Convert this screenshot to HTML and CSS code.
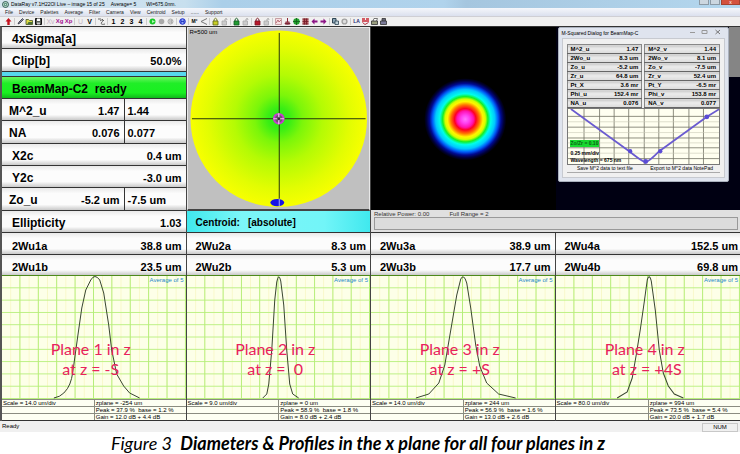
FILE: index.html
```html
<!DOCTYPE html>
<html lang="en">
<head>
<meta charset="utf-8">
<title>DataRay BeamMap</title>
<link rel="stylesheet" href="styles.css">
</head>
<body>
<figure class="figure">
<div class="app">
  <header class="titlebar">
    <svg class="logo" viewBox="0 0 8 8"><circle cx="4" cy="4" r="3.4" fill="#cfe4dc" stroke="#17483d"/><circle cx="4" cy="4" r="1.4" fill="none" stroke="#1c6b4a"/></svg>
    <span>DataRay v7.1H22Ol Live – image 15 of 25</span><span class="title-avg">Average= 5</span><span>Wl=675.0nm.</span>
    <span class="window-buttons"><button class="winbtn" aria-label="Minimize"></button><button class="winbtn" aria-label="Maximize"></button><button class="winbtn close" aria-label="Close">x</button></span>
  </header>
  <nav class="menubar"><a href="#">File</a><a href="#">Device</a><a href="#">Palettes</a><a href="#">Average</a><a href="#">Filter</a><a href="#">Camera</a><a href="#">View</a><a href="#">Centroid</a><a href="#">Setup</a><a href="#">......</a><a href="#">Support</a></nav>
  <div class="toolbar">
    <button aria-label="Up"><svg viewBox="0 0 9 9"><path d="M4.5 1 7.5 4.5H5.7V8H3.3V4.5H1.5z" fill="#c3101c"/></svg></button><i></i>
    <button aria-label="Edit"><svg viewBox="0 0 9 9"><path d="M2 7 3 5 6.5 1.5 7.5 2.500 4 6z" fill="#8a8ca4" stroke="#30313c" stroke-width=".8"/></svg></button>
    <button aria-label="Open"><svg viewBox="0 0 9 9"><path d="M1 7.500V2.500H3.500L4.500 3.500H7.500V7.500z" fill="#dadb45" stroke="#45502a" stroke-width=".8"/><path d="M2 7.500 3.500 5H8L7 7.500z" fill="#4e7037"/></svg></button>
    <button aria-label="Save"><svg viewBox="0 0 9 9"><path d="M1.500 1.500H7.500V7.500H1.500z" fill="#555b55" stroke="#111"/><path d="M3 1.500H6V4H3z" fill="#fff"/><path d="M3 5.500H6V7.500H3z" fill="#ccc"/></svg></button><i></i>
    <button class="faded">Xv</button><button class="violet">Xg</button><button class="violet">Xp</button><i></i>
    <button class="faded">U</button><button>V</button><i></i>
    <button aria-label="Cursor"><svg viewBox="0 0 9 9"><path d="M1 2H4M3 4C5 2 7 3 5 5S5 8 8 7M5 2 7 4" fill="none" stroke="#555" stroke-width=".9"/></svg></button><i></i>
    <button>1</button><button>2</button><button>3</button><button>4</button><i></i>
    <button aria-label="Go"><svg viewBox="0 0 9 9"><circle cx="4.500" cy="4.500" r="3" fill="#18c928"/><path d="M4 3V6L7 4.500z" fill="#b1f5b5"/></svg></button>
    <button aria-label="Stop"><svg viewBox="0 0 9 9"><circle cx="4.500" cy="4.500" r="2.800" fill="#aaa"/></svg></button>
    <button aria-label="Pause"><svg viewBox="0 0 9 9"><circle cx="4.500" cy="4.500" r="2.500" fill="#ddd" stroke="#aaa"/><path d="M4 3V6M5.500 3V6" stroke="#999" stroke-width=".7"/></svg></button><i></i>
    <button aria-label="Target"><svg viewBox="0 0 9 9"><circle cx="4.500" cy="4.500" r="2.800" fill="#8ea8f6" stroke="#1b2bd1"/><path d="M3 2.500V6.500M6 2.500V6.500M3 4.500H6" stroke="#1726ba" stroke-width=".8"/></svg></button><i></i>
    <button class="small">M²</button>
    <button aria-label="Divergence"><svg viewBox="0 0 9 9"><path d="M8 1.500 2 4.500 8 7.500" fill="none" stroke="#777"/></svg></button><i></i>
    <button aria-label="Lock"><svg viewBox="0 0 9 9"><path d="M3 4V2.500Q4.500 0 6 2.500V4" fill="none" stroke="#77801a"/><path d="M2 4H7V8H2z" fill="#c8cf26" stroke="#5c621b" stroke-width=".8"/></svg></button>
    <button aria-label="Unlock"><svg viewBox="0 0 9 9"><path d="M5 4V2Q7 .5 7 3" fill="none" stroke="#aaa"/><path d="M2 4H6.500V8H2z" fill="#ccc" stroke="#aaa" stroke-width=".8"/></svg></button><i></i>
    <button aria-label="Lock green"><svg viewBox="0 0 9 9"><path d="M3 4V2.500Q4.500 0 6 2.500V4" fill="none" stroke="#155c23"/><path d="M2 4H7V8H2z" fill="#219b31" stroke="#155c23" stroke-width=".8"/></svg></button>
    <button aria-label="Unlock green"><svg viewBox="0 0 9 9"><path d="M5 4V2Q7 .5 7 3" fill="none" stroke="#aaa"/><path d="M2 4H6.500V8H2z" fill="#ccc" stroke="#aaa" stroke-width=".8"/></svg></button><i></i>
    <button aria-label="Lock red"><svg viewBox="0 0 9 9"><path d="M3 4V2.500Q4.500 0 6 2.500V4" fill="none" stroke="#7c1422"/><path d="M2 4H7V8H2z" fill="#b8182b" stroke="#7c1422" stroke-width=".8"/></svg></button>
    <button aria-label="Unlock red"><svg viewBox="0 0 9 9"><path d="M5 4V2Q7 .5 7 3" fill="none" stroke="#aaa"/><path d="M2 4H6.500V8H2z" fill="#ccc" stroke="#aaa" stroke-width=".8"/></svg></button><i></i>
    <button aria-label="Profile"><svg viewBox="0 0 9 9"><path d="M1.500 1.500H7.500V7.500H1.500z" fill="#f7dfe0" stroke="#bb8c91" stroke-width=".8"/><path d="M2 6 4 3 5 5 7 3" fill="none" stroke="#a9565f" stroke-width=".8"/></svg></button>
    <button aria-label="Level"><svg viewBox="0 0 9 9"><path d="M4.500 1V5M2.500 5H6.500" stroke="#8f2638"/><ellipse cx="4.500" cy="6.500" rx="3" ry="1.200" fill="#802738"/></svg></button>
    <button aria-label="Centre"><svg viewBox="0 0 9 9"><circle cx="4.500" cy="4.500" r="3.200" fill="#23a32e"/><path d="M4.500 1V8M1 4.500H8" stroke="#14651d" stroke-width=".9"/></svg></button>
    <button aria-label="Grid"><svg viewBox="0 0 9 9"><path d="M1.500 1.500H7.500V7.500H1.500z" fill="#b76065"/><path d="M1.500 2H7.500M1.500 4.500H7.500M1.500 7H7.500M3.500 1.500V7.500M5.500 1.500V7.500" stroke="#731926" stroke-width=".8"/></svg></button>
    <button aria-label="Previous"><svg viewBox="0 0 9 9"><path d="M1.500 4.500 4.500 1.500V3.500H7.500V5.500H4.500V7.500z" fill="#8d1586"/></svg></button>
    <button aria-label="Next"><svg viewBox="0 0 9 9"><path d="M7.500 4.500 4.500 1.500V3.500H1.500V5.500H4.500V7.500z" fill="#8d1586"/></svg></button><i></i>
    <button aria-label="Copy"><svg viewBox="0 0 9 9"><path d="M1.500 1.500H5V6H1.500z" fill="#8ba5b5" stroke="#2f4555"/><path d="M4 4H7.500V7.500H4z" fill="#bed1d9" stroke="#2f4555" stroke-width=".8"/></svg></button>
    <button aria-label="Settings"><svg viewBox="0 0 9 9"><circle cx="4.500" cy="4.500" r="2.400" fill="#ddd" stroke="#a3a3a3" stroke-width="1.400"/></svg></button><i></i>
    <button class="navy">LA</button>
    <button aria-label="Log"><svg viewBox="0 0 9 9"><path d="M1 2H4M5 2H8M1 4H8" stroke="#c92a37" stroke-width="1.500"/><path d="M1.500 5.500 4 7.500 7.500 5.500" fill="#eee" stroke="#b63042"/></svg></button>
    <button aria-label="Print"><svg viewBox="0 0 9 9"><path d="M3 4 4 1.500H7.500L6.500 4" fill="#fff" stroke="#555" stroke-width=".8"/><path d="M1.500 4H7.500V7.500H1.500z" fill="#9a9f80" stroke="#333" stroke-width=".8"/></svg></button>
    <button aria-label="Print preview"><svg viewBox="0 0 9 9"><path d="M3 4V1.500H6.500V4" fill="#667" stroke="#333" stroke-width=".8"/><path d="M1.500 4H7.500V7.500H1.500z" fill="#7a7a98" stroke="#333" stroke-width=".8"/></svg></button>
  </div>

  <main class="workspace">
    <div class="top">
      <section class="readout">
        <div class="row"><span class="name">4xSigma[a]</span></div>
        <div class="row"><span class="name">Clip[b]</span><span class="value">50.0%</span></div>
        <div class="cyan-bar"></div>
        <div class="row ready"><span class="name">BeamMap-C2&nbsp; ready</span></div>
        <div class="row pair"><span class="name">M^2_u</span><span class="value">1.47</span><span class="second">1.44</span></div>
        <div class="row pair"><span class="name">NA</span><span class="value">0.076</span><span class="second">0.077</span></div>
        <div class="row"><span class="name">X2c</span><span class="value">0.4 um</span></div>
        <div class="row"><span class="name">Y2c</span><span class="value">-3.0 um</span></div>
        <div class="row pair"><span class="name">Zo_u</span><span class="value">-5.2 um</span><span class="second">-7.5 um</span></div>
        <div class="row"><span class="name">Ellipticity</span><span class="value">1.03</span></div>
      </section>
      <section class="position">
        <div class="disc-view">
          <span class="tiny radius">R=500 um</span>
          <svg viewBox="0 0 182 182">
            <defs><radialGradient id="disc" cx=".5" cy=".5" r=".5"><stop offset="0" stop-color="#25e61c"/><stop offset=".12" stop-color="#38ee14"/><stop offset=".27" stop-color="#7bf60a"/><stop offset=".5" stop-color="#b4fb04"/><stop offset=".8" stop-color="#e2fd02"/><stop offset="1" stop-color="#f8ff00"/></radialGradient></defs>
            <circle cx="90" cy="92" r="89.500" fill="url(#disc)"/>
            <path d="M90.500 5V178M2 92H178" stroke="#26330c"/>
            <circle cx="90" cy="92" r="4.800" fill="#6d576f" stroke="#c63bd0" stroke-width="2.200"/>
            <path d="M90 86.500V97.500M84.500 92H95.500" stroke="#efc1f2" stroke-width="1.200"/><circle cx="90" cy="92" r="1.500" fill="#333"/>
            <ellipse cx="88.500" cy="177" rx="7" ry="3.700" fill="#1612e6"/><path d="M90.500 173V181" stroke="#aab2f8"/>
          </svg>
        </div>
        <div class="centroid">Centroid:<span>[absolute]</span></div>
      </section>
      <section class="image-pane">
        <div class="image-view">
          <div class="beam-half"><svg viewBox="0 0 184 182">
            <defs><radialGradient id="beam"><stop offset="0" stop-color="#ff78ff"/><stop offset=".1" stop-color="#ff41f2"/><stop offset=".2" stop-color="#ff12b0"/><stop offset=".26" stop-color="#ff0022"/><stop offset=".35" stop-color="#ff7400"/><stop offset=".43" stop-color="#fff500"/><stop offset=".49" stop-color="#d4ff00"/><stop offset=".55" stop-color="#14ef26"/><stop offset=".62" stop-color="#00ffe8"/><stop offset=".72" stop-color="#00c8ff"/><stop offset=".8" stop-color="#0058f5"/><stop offset=".87" stop-color="#000a91"/><stop offset=".94" stop-color="#000037"/><stop offset="1" stop-color="#000"/></radialGradient></defs>
            <circle cx="94" cy="92" r="41" fill="url(#beam)"/></svg></div>
          <div class="side-half"><div class="side-gray"></div></div>
          <div class="dialog" role="dialog" aria-label="M-Squared Dialog">
            <div class="dialog-title"><span>M-Squared Dialog for BeamMap-C</span><svg viewBox="0 0 36 8"><path d="M1 4.500H6M13 2.500H18V5.500H13z" fill="none" stroke="#999"/><path d="M26.500 2 31 6M31 2 26.500 6" stroke="#777"/></svg></div>
            <div class="dialog-body">
              <div class="tables">
                <table><tr><th>M^2_u</th><td>1.47</td></tr><tr><th>2Wo_u</th><td>8.3 um</td></tr><tr><th>Zo_u</th><td>-5.2 um</td></tr><tr><th>Zr_u</th><td>64.8 um</td></tr><tr><th>Pt_X</th><td>3.6 mr</td></tr><tr><th>Phi_u</th><td>152.4 mr</td></tr><tr><th>NA_u</th><td>0.076</td></tr></table>
                <table><tr><th>M^2_v</th><td>1.44</td></tr><tr><th>2Wo_v</th><td>8.1 um</td></tr><tr><th>Zo_v</th><td>-7.5 um</td></tr><tr><th>Zr_v</th><td>52.4 um</td></tr><tr><th>Pt_Y</th><td>-6.5 mr</td></tr><tr><th>Phi_v</th><td>153.8 mr</td></tr><tr><th>NA_v</th><td>0.077</td></tr></table>
              </div>
              <div class="caustic">
                <svg viewBox="0 0 156 56" preserveAspectRatio="none">
                  <path d="M16.500 0V56M32.500 0V56M47.500 0V56M62.500 0V56M78.500 0V56M93.500 0V56M108.500 0V56M124.500 0V56M139.500 0V56M0 7.500H156M0 18.500H156M0 29.500H156M0 39.500H156M0 50.500H156" stroke="#6f7062" stroke-width=".8"/>
                  <path d="M0 13H156M0 24H156M0 34.500H156M0 45H156" stroke="#c9c9b6" stroke-width=".6"/>
                  <path d="M3 0 63 43Q77 54 80 54T94 43L143 8 156 0" fill="none" stroke="#6a5bd0" stroke-width="1.800"/>
                  <g fill="#5a4bd6"><circle cx="64" cy="43" r="2.200"/><circle cx="80" cy="53.500" r="2.500"/><circle cx="95" cy="43" r="2.200"/><circle cx="143" cy="8" r="2.500"/></g>
                </svg>
                <div class="caustic-text"><b class="ratio">Zo/Zr = 0.10</b><b>0.25 mm/div</b><b>Wavelength = 675 nm</b></div>
              </div>
              <div class="dialog-actions"><button>Save M^2 data to text file</button><button>Export to M^2 data NotePad</button></div>
            </div>
          </div>
        </div>
        <div class="power"><div class="tiny power-text"><span>Relative Power: 0.00</span><span>Full Range = 2</span></div><div class="power-meter"></div></div>
      </section>
    </div>

    <div class="planes">
      <section class="plane">
        <div class="row"><span class="name">2Wu1a</span><span class="value">38.8 um</span></div>
        <div class="row"><span class="name">2Wu1b</span><span class="value">23.5 um</span></div>
        <div class="chart"><svg viewBox="0 0 184 123" preserveAspectRatio="none"><path d="M52 122Q58 121 62 117T68 108 71 96L76 60 80 32 84 14 89 4Q93 -3 98 4L102 17 107 49 110 74 115 98 122 110 128 117 138 122"/></svg><span class="tiny average">Average of 5</span><p>Plane 1 in z<br>at z = -S</p></div>
        <div class="info tiny"><span>Scale = 14.0 um/div</span><span>zplane = -254 um</span><span></span><span>Peak = 37.9 %&nbsp; base = 1.2 %</span><span></span><span>Gain = 12.0 dB + 4.4 dB</span></div>
      </section>
      <section class="plane">
        <div class="row"><span class="name">2Wu2a</span><span class="value">8.3 um</span></div>
        <div class="row"><span class="name">2Wu2b</span><span class="value">5.3 um</span></div>
        <div class="chart"><svg viewBox="0 0 184 123" preserveAspectRatio="none"><path d="M76 122 80 118 82 108 85 74 88 24 90 6Q92 -4 94 5L97 29 100 74 103 108 106 118 112 122"/></svg><span class="tiny average">Average of 5</span><p>Plane 2 in z<br>at z =&nbsp; 0</p></div>
        <div class="info tiny"><span>Scale = 9.0 um/div</span><span>zplane = 0 um</span><span></span><span>Peak = 58.9 %&nbsp; base = 1.8 %</span><span></span><span>Gain = 8.0 dB + 2.4 dB</span></div>
      </section>
      <section class="plane">
        <div class="row"><span class="name">2Wu3a</span><span class="value">38.9 um</span></div>
        <div class="row"><span class="name">2Wu3b</span><span class="value">17.7 um</span></div>
        <div class="chart"><svg viewBox="0 0 184 123" preserveAspectRatio="none"><path d="M45 122 58 118 68 107 74 89 80 54 86 19 90 3Q93 -3 96 7L100 32 105 69 109 90 116 107 128 118 145 122"/></svg><span class="tiny average">Average of 5</span><p>Plane 3 in z<br>at z = +S</p></div>
        <div class="info tiny"><span>Scale = 14.0 um/div</span><span>zplane = 244 um</span><span></span><span>Peak = 56.9 %&nbsp; base = 1.6 %</span><span></span><span>Gain = 13.0 dB + 2.6 dB</span></div>
      </section>
      <section class="plane">
        <div class="row"><span class="name">2Wu4a</span><span class="value">152.5 um</span></div>
        <div class="row"><span class="name">2Wu4b</span><span class="value">69.8 um</span></div>
        <div class="chart"><svg viewBox="0 0 184 123" preserveAspectRatio="none"><path d="M61 122 71 116 76 102 80 79 84 54 88 26 91 4Q93 -3 95 5L99 34 103 74 107 97 112 110 118 118 127 122"/></svg><span class="tiny average">Average of 5</span><p>Plane 4 in z<br>&nbsp;at z = +4S</p></div>
        <div class="info tiny"><span>Scale = 80.0 um/div</span><span>zplane = 994 um</span><span></span><span>Peak = 73.5 %&nbsp; base = 5.4 %</span><span></span><span>Gain = 20.0 dB + 1.7 dB</span></div>
      </section>
    </div>
  </main>
  <footer class="statusbar"><span>Ready</span><span class="num">NUM</span></footer>
</div>
<figcaption>Figure 3&nbsp; <b>Diameters &amp; Profiles in the x plane for all four planes in z</b></figcaption>
</figure>
</body>
</html>
```
FILE: styles.css
```css
* { box-sizing: border-box; }
body { margin: 0; background: #fff; color: #000; font-family: "Liberation Sans", Arial, sans-serif; }
.figure { margin: 0; }
.app { background: #f0f0f0; overflow: hidden; }
button { padding: 0; border: 0; background: none; font: inherit; color: inherit; }

.titlebar { display: flex; align-items: center; height: 8px; padding-left: 2px; font-size: 5px; line-height: 8px; white-space: pre; background: linear-gradient(90deg, #d8e6f0, #c7dfee 25%, #abcfe9 30%, #b0d3ec 60%, #a5c6df 63%, #b4d7ee); }
.logo { width: 7px; height: 7px; margin-right: 2px; }
.title-avg { margin: 0 10px 0 6px; }
.window-buttons { display: flex; align-self: flex-start; gap: 1px; margin-left: auto; }
.winbtn { width: 10px; height: 5px; border: 1px solid #8d9aa5; border-top: 0; background: #ccd7e0; }
.winbtn.close { width: 19px; background: #d4523e; border-color: #a6422f; color: #fff; line-height: 4px; }

.menubar { display: flex; gap: 6px; height: 8px; padding-left: 5px; font-size: 5px; line-height: 8px; background: linear-gradient(#f5f7fb, #dbe0ee); }
.menubar a { color: #222; text-decoration: none; }
.toolbar { display: flex; align-items: center; height: 10px; padding-left: 4px; background: #f0f0f0; border-top: 1px solid #cfcfd4; }
.toolbar button { flex: none; width: 9px; height: 9px; font-size: 7px; line-height: 9px; font-weight: bold; text-align: center; }
.toolbar svg { display: block; width: 9px; height: 9px; }
.toolbar i { width: 1px; height: 7px; margin: 0 1px; background: #ccc; }
.toolbar .faded { color: #c5b5c5; font-weight: normal; }
.toolbar .violet { color: #a3128f; font-size: 6px; }
.toolbar .small { font-size: 5px; }
.toolbar .navy { color: #252a75; font-size: 5px; }

.workspace { border-left: 2px solid #555; border-top: 1px solid #333; }
.top { display: grid; grid-template-columns: 1fr 1fr 2fr; min-height: 206px; }
.readout { display: grid; grid-template-rows: 1fr 1fr 5px repeat(7, 1fr); min-width: 0; border-right: 1px solid #444; }
.row { display: flex; align-items: center; justify-content: space-between; min-height: 21px; padding: 3px 4px 0 10px; border-bottom: 1px solid #333; background: linear-gradient(#e9e9e9, #fcfcfc 25%, #fcfcfc 75%, #c9c9c9); font-size: 12px; line-height: 14px; font-weight: bold; white-space: nowrap; }
.value, .second { font-size: 11px; }
.cyan-bar { background: #56d8ee; border-bottom: 1px solid #333; }
.ready { background: linear-gradient(#6cf463, #20ee27 30%, #18f020 75%, #10b81c); }
.pair { display: grid; grid-template-columns: 1fr auto 62px; gap: 0; align-items: stretch; padding: 0 0 0 7px; }
.pair > span { padding-top: 5px; }
.pair .value { padding-right: 4px; }
.pair .second { padding-left: 3px; border-left: 1px solid #333; }

.tiny { font-size: 6px; line-height: 7px; }
.position { display: grid; grid-template-rows: 1fr 22px; min-width: 0; border-right: 1px solid #444; }
.disc-view { position: relative; padding-left: 2px; background: #c0c0c0; border: 1px solid #e8e8e8; border-bottom: 2px solid #444; }
.disc-view svg { display: block; width: 100%; }
.radius { position: absolute; left: 2px; top: 1px; }
.centroid { padding: 5px 0 0 9px; background: linear-gradient(90deg, #40e8ee, #7cf6f8 30%, #72f5f8 75%, #40e8ee); border-bottom: 1px solid #333; font-size: 10px; line-height: 14px; font-weight: bold; }
.centroid span { margin-left: 8px; }

.image-pane { display: grid; grid-template-rows: 1fr 23px; min-width: 0; }
.image-view { position: relative; display: grid; grid-template-columns: 1fr 1fr; background: #000; }
.beam-half svg { display: block; width: 100%; }
.side-half { background: #000012; }
.side-gray { width: 11px; height: 50px; margin-left: auto; background: #858585; }
.power { padding: 2px 2px 2px 3px; background: #e0e0e0; border-bottom: 1px solid #333; }
.power-text { display: flex; gap: 20px; line-height: 5px; color: #333; }
.power-meter { height: 13px; border: 1px solid #999; background: #dcdcdc; }

.dialog { position: absolute; top: 0; left: 50%; right: 11px; margin-left: 2px; padding: 0 3px 3px; border: 1px solid #aab1bd; border-radius: 2px; background: #dfe4ee; }
.dialog-title { display: flex; justify-content: space-between; height: 10px; font-size: 5px; line-height: 11px; }
.dialog-title svg { width: 36px; height: 8px; }
.dialog-body { padding: 5px 4px 4px; background: #f0f0f0; border: 1px solid #c7cad0; }
.tables { display: grid; grid-template-columns: 1fr 1fr; gap: 2px; }
.tables table { width: 100%; border-collapse: collapse; border: 1px solid #888; font-size: 6px; line-height: 7px; }
.tables th, .tables td { height: 9px; padding: 1px 3px 0; border-bottom: 1px solid #666; background: linear-gradient(#c8c8c8, #ececec 40%, #dadada); text-align: left; font-weight: bold; }
.tables td { text-align: right; }
.tables tr > * + * { padding-left: 0; }
.caustic { position: relative; height: 57px; border: 1px solid #777; background: #fffff0; }
.caustic svg { display: block; width: 100%; height: 100%; }
.caustic-text { position: absolute; left: 2px; bottom: 0; display: flex; flex-direction: column; align-items: flex-start; font-size: 5px; line-height: 7px; }
.caustic-text b { padding: 0 1px; }
.caustic-text .ratio { margin-bottom: 3px; color: #0b5a14; background: #18d830; }
.dialog-actions { display: grid; grid-template-columns: 1fr 1fr; font-size: 5px; line-height: 7px; }
.dialog-actions button { border-bottom: 1px solid #aaa; white-space: nowrap; }

.planes { display: grid; grid-template-columns: repeat(4, 1fr); }
.plane { min-width: 0; border-right: 1px solid #444; }
.plane:last-child { border-right: 0; }
.plane .row { height: 22px; padding-top: 4px; padding-left: 9px; font-size: 11px; }
.plane:first-child .row { padding-left: 10px; }
.plane .row + .row { height: 21px; border-bottom-color: #4e8a1c; }
.plane:last-child .row { padding-right: 2px; }
.chart { position: relative; height: 123px; background-color: #fdffe8; background-image: linear-gradient(90deg, transparent calc(100% - 1px), #b4ee78 0), linear-gradient(transparent calc(100% - 1px), #baf080 0), linear-gradient(90deg, transparent calc(100% - 1px), #f8f8c8 0); background-size: 10% 100%, 100% 10%, 5% 100%; }
.chart svg { display: block; width: 100%; height: 100%; }
.chart path { fill: none; stroke: #38452f; stroke-width: 1; }
.average { position: absolute; top: 1px; right: 2px; color: #2489c9; }
.chart p { position: absolute; left: 0; right: 6px; top: 63px; margin: 0; text-align: center; color: #e8225c; font-family: Lato, sans-serif; font-size: 16px; line-height: 20px; }
.info { display: grid; grid-template-columns: 1fr 1fr; grid-auto-rows: 7px; border-bottom: 1px solid #333; background: #fdfff2; white-space: nowrap; }
.info span { padding-left: 1px; border-top: 1px solid #8a8c80; }
.info span:nth-child(even) { border-left: 1px solid #8a8c80; }

.statusbar { display: flex; justify-content: space-between; height: 11px; padding: 2px 2px 0 2px; font-size: 6px; line-height: 7px; background: #f0f0f0; }
.num { width: 36px; border: 1px solid #c8c8c8; text-align: center; }
figcaption { text-align: center; padding-right: 24px; font-family: Lato, sans-serif; font-style: italic; font-size: 18px; line-height: 22px; }
```
